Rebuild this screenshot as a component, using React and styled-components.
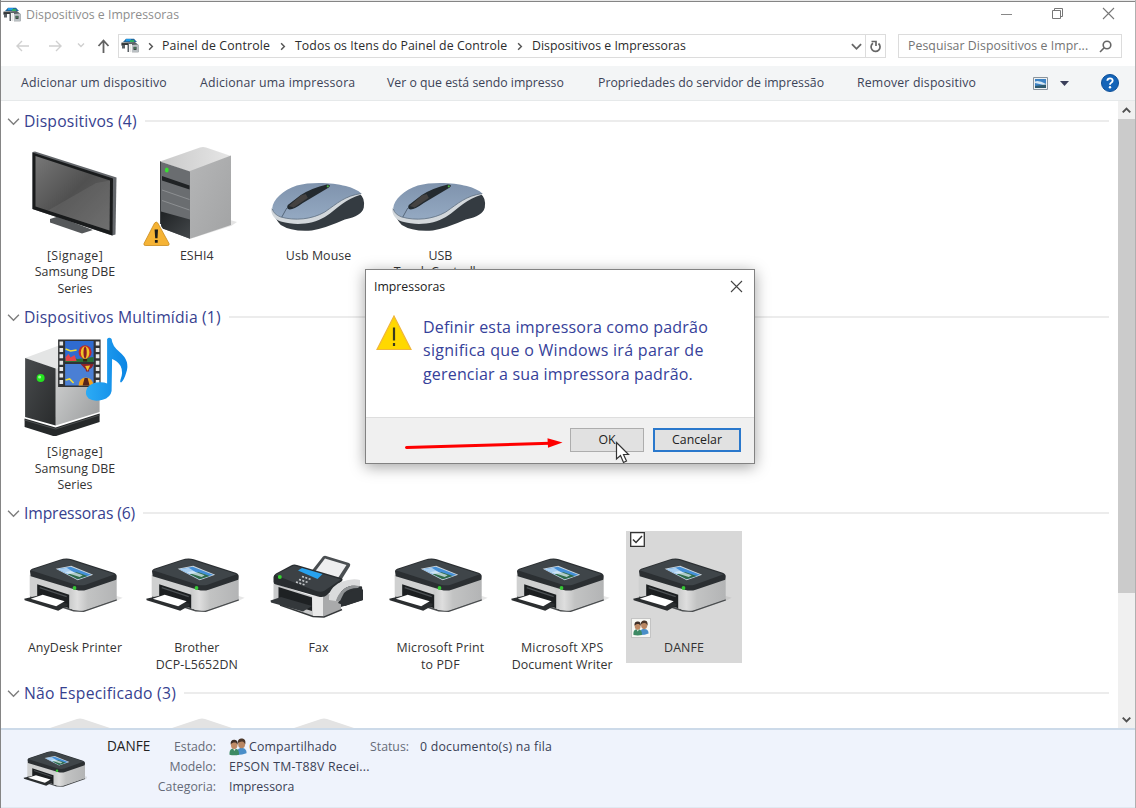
import React from "react";
import styled, { createGlobalStyle, css } from "styled-components";

const GlobalStyle = createGlobalStyle`
  *, *::before, *::after { box-sizing: border-box; }
  html, body { margin: 0; padding: 0; background: #fff; }
  body { overflow: hidden; }
  svg { display: block; flex: none; }
`;

const ui = css`
  font-family: "Open Sans", "Noto Sans", sans-serif;
  font-size: 12.3px;
  line-height: 16px;
  white-space: nowrap;
`;

const Window = styled.main`
  ${ui}
  position: relative;
  display: flex;
  flex-direction: column;
  width: 1136px;
  height: 808px;
  overflow: hidden;
  color: #333;
  background: #fff;
  border-left: 1px solid #858585;
  border-right: 1px solid #b0b0b0;
`;

const TopEdge = styled.div`
  flex: none;
  height: 2px;
  background: #e8e8e8;
  border-bottom: 1px solid #858585;
`;

const TitleBar = styled.header`
  display: flex;
  align-items: center;
  flex: none;
  height: 27px;
  padding: 0 20px 2px 2px;
`;

const Title = styled.h1`
  flex: 1;
  margin: 0 0 0 5px;
  font-size: inherit;
  font-weight: 400;
  color: #8e8e8e;
`;

const WindowControls = styled.div`
  display: flex;
  gap: 38px;
  margin-top: -3px;
`;

const NavBar = styled.nav`
  display: flex;
  align-items: center;
  flex: none;
  height: 34px;
  padding: 0 13px 0 14px;
`;

const NavButtons = styled.div`
  display: flex;
  align-items: center;
  width: 103px;
`;

const AddressBox = styled.div`
  display: flex;
  align-items: center;
  width: 768px;
  height: 24px;
  padding-left: 2px;
  border: 1px solid #dcdcdc;
`;

const Crumb = styled.span`
  width: ${(p) => p.$w}px;
  color: #2c2c2c;
  letter-spacing: ${(p) => p.$track || 0}px;
`;

const CrumbArrow = styled.span`
  display: flex;
  justify-content: center;
  width: ${(p) => p.$w || 25}px;
`;

const AddressTail = styled.div`
  display: flex;
  align-items: center;
  margin-left: auto;
  height: 100%;
`;

const RefreshButton = styled.div`
  display: flex;
  align-items: center;
  justify-content: center;
  width: 20px;
  height: 100%;
  margin-left: 3px;
  border-left: 1px solid #dcdcdc;
`;

const SearchBox = styled.div`
  display: flex;
  align-items: center;
  justify-content: space-between;
  flex: 1;
  height: 24px;
  margin-left: 12px;
  padding: 0 9px;
  color: #747474;
  letter-spacing: 0.06px;
  border: 1px solid #dcdcdc;
`;

const CommandBar = styled.div`
  display: flex;
  align-items: center;
  flex: none;
  height: 38px;
  padding: 0 16px 0 20px;
  border-top: 3px solid #fff;
  background: #f3f5f6;
  border-bottom: 1px solid #e6e9ea;
`;

const Command = styled.span`
  width: ${(p) => p.$w}px;
  color: #3c4357;
  letter-spacing: ${(p) => p.$track || 0}px;
`;

const ViewTools = styled.div`
  display: flex;
  flex: 1;
  align-items: center;
  gap: 12px;
`;

const Body = styled.div`
  display: flex;
  flex: 1;
  min-height: 0;
`;

const Content = styled.section`
  flex: 1;
  min-width: 0;
  padding: 8px 9px 0 6px;
  overflow: hidden;
`;

const GroupHead = styled.div`
  display: flex;
  align-items: center;
  height: 24px;
  margin-bottom: 6px;
`;

const GroupTitle = styled.h2`
  margin: 0 0 0 4px;
  font-size: 15.7px;
  line-height: 22px;
  font-weight: 400;
  color: #36418f;
  letter-spacing: ${(p) => p.$track || 0}px;
`;

const Rule = styled.div`
  flex: 1;
  height: 2px;
  margin-left: 8px;
  background: #ececec;
`;

const Grid = styled.div`
  display: flex;
  align-items: flex-start;
  gap: 5.8px;
  padding-left: 10px;
  margin-bottom: 2px;
`;

const Tile = styled.div`
  position: relative;
  width: 116px;
  padding-bottom: 6px;
  text-align: center;
  background: ${(p) => (p.$selected ? "#d8d8d8" : "transparent")};
`;

const TileLabel = styled.div`
  color: #333;
  font-size: 12.4px;
  line-height: 16.4px;
  letter-spacing: ${(p) => p.$track ?? 0.08}px;
`;

const Check = styled.span`
  position: absolute;
  left: 4px;
  top: 1px;
`;

const SharedBadge = styled.span`
  position: absolute;
  left: 5px;
  top: 87px;
  width: 20px;
  height: 20px;
  padding: 1px;
  background: #f7f7f4;
  border: 1px solid #c4c4c4;
`;

const Scrollbar = styled.div`
  display: flex;
  flex-direction: column;
  width: 17px;
  background: #f0f0f0;
`;

const ScrollButton = styled.div`
  display: flex;
  align-items: center;
  justify-content: center;
  height: 18px;
  margin-top: ${(p) => (p.$end ? "auto" : 0)};
`;

const Thumb = styled.div`
  height: 474px;
  background: #cbcbcb;
`;

const Details = styled.footer`
  display: flex;
  flex: none;
  height: 80px;
  padding: 0 0 0 22px;
  background: #eff3fc;
  border-top: 2px solid #ccdae9;
  border-bottom: 1px solid #e0e9f2;
`;

const DetailsThumb = styled.div`
  width: 66px;
  padding: 20px 0 0;
  margin-left: -1px;
`;

const DetailsName = styled.div`
  width: 46px;
  margin: 8px 3px 0 19px;
  font-size: 13.6px;
  color: #222;
`;

const Fields = styled.dl`
  display: grid;
  grid-template-columns: ${(p) => p.$cols};
  grid-auto-rows: 20px;
  align-content: start;
  column-gap: ${(p) => p.$gap || 12}px;
  margin: 7px 0 0;
  line-height: 20px;
`;

const Term = styled.dt`
  text-align: right;
  color: #666b78;
`;

const Value = styled.dd`
  display: flex;
  align-items: center;
  gap: 2px;
  margin: 0;
  color: #3a3f55;
  letter-spacing: ${(p) => p.$track || 0}px;
`;

const Dialog = styled.div`
  position: absolute;
  left: 364px;
  top: 269px;
  display: flex;
  flex-direction: column;
  width: 390px;
  height: 195px;
  background: #fff;
  border: 1px solid #828282;
  box-shadow: 0 3px 14px rgba(0, 0, 0, 0.36);
`;

const DialogHead = styled.div`
  display: flex;
  align-items: center;
  justify-content: space-between;
  height: 32px;
  padding: 1px 11px 0 8px;
  color: #222;
`;

const DialogBody = styled.div`
  display: flex;
  flex: 1;
  padding: 13px 0 0 10px;
`;

const Message = styled.p`
  margin: 1px 0 0 11px;
  font-size: 16px;
  line-height: 23.3px;
  color: #36419a;
`;

const MessageLine = styled.span`
  display: block;
  letter-spacing: ${(p) => p.$track || 0}px;
`;

const DialogFoot = styled.div`
  display: flex;
  justify-content: flex-end;
  gap: 9px;
  height: 46px;
  padding: 10px 13px 0 0;
  background: #f0f0f0;
  border-top: 1px solid #dedede;
`;

const Button = styled.button`
  ${ui}
  width: ${(p) => p.$w}px;
  height: 24px;
  padding: 0;
  color: #222;
  background: #e1e1e1;
  border: ${(p) => (p.$focus ? "2px solid #2a78cc" : "1px solid #adadad")};
`;

const Overlay = styled.div`
  position: absolute;
  left: ${(p) => p.$x}px;
  top: ${(p) => p.$y}px;
`;

const Chevron = ({ dir = "down", size = 12, color = "#777", w = 1.4 }) => {
  const d = { down: "M1 3.5 6 8.5 11 3.5", up: "M1 8.5 6 3.5 11 8.5", right: "M4.5 2.5 8 6 4.5 9.500" }[dir];
  return (
    <svg width={size} height={size} viewBox="0 0 12 12" fill="none" stroke={color} strokeWidth={w}>
      <path d={d} />
    </svg>
  );
};

const CloseIcon = ({ size = 13, color = "#777" }) => (
  <svg width={size} height={size} viewBox="0 0 13 13" stroke={color} strokeWidth="1.1">
    <path d="M1 1 12 12M12 1 1 12" />
  </svg>
);

const DevicesIcon = ({ w = 18 }) => (
  <svg width={w} height={w * 0.84} viewBox="0 0 18 15">
    <path d="M2 4 5 .8h8L16 4z" fill="#25699a" />
    <path d="M5 1h5v2H5z" fill="#1e9be8" />
    <path d="M9 2h4v2H9z" fill="#2faf63" />
    <path d="M.5 4.500 14 4l3.500 3v7.300H11V6H8v8H6.500V7H4v3.500H1V8H.5z" fill="#5b6166" />
    <path d="M.5 6H7" stroke="#222" strokeWidth="1.200" />
    <path d="M8.500 6h2v8h-2z" fill="#e6e6e6" />
    <path d="M11 7 17.300 6.500v7.500H11z" fill="#b9bfc2" />
    <path d="M12.500 8.800h3v3h-3z" fill="#2b2f31" />
    <circle cx="14" cy="10" r=".8" fill="#69c28a" />
  </svg>
);

const People = ({ size = 18 }) => (
  <svg width={size} height={size} viewBox="0 0 18 18">
    <path d="M8 17c-.5-5 1-7 4.500-7s5.200 2 5 5.200q-4 1.700-9.500 1.800z" fill="#4a8ec8" />
    <ellipse cx="12.600" cy="5.700" rx="3.500" ry="4.600" fill="#b98662" />
    <path d="M9 5C8.500 1.500 11 .4 13.200.6c3 .3 3.700 3 3 6-.7-2-1.500-2.700-3-3.100Q11 3.300 9 5z" fill="#4b3629" />
    <path d="M.5 16.800C.2 12.300 1.700 10.500 5.200 10.500s5 2 4.800 6.300q-4.700 1-9.500 0z" fill="#3d8a64" />
    <path d="M4 10.500 5.300 13l1.700-2.500z" fill="#e6ede9" />
    <ellipse cx="5.200" cy="6.700" rx="3.300" ry="4.200" fill="#bf8b66" />
    <path d="M1.700 6.500C1.200 3 3 1.500 5.500 1.700c2.600.1 3.700 2 3 5C7.700 5 7 4.500 5.500 4.500S2.800 5 1.700 6.500z" fill="#3d2d25" />
  </svg>
);

const Frame = ({ x, y, w = 116, h = 109, width = w, height = h, children }) => (
  <svg width={width} height={height} viewBox={`${x} ${y} ${w} ${h}`}>
    {children}
  </svg>
);

const Monitor = () => (
  <Frame x={17} y={139}>
    <defs>
      <linearGradient id="scr" x1="0" y1="0" x2="1" y2="1">
        <stop offset="0" stopColor="#777" />
        <stop offset=".5" stopColor="#505050" />
        <stop offset="1" stopColor="#686868" />
      </linearGradient>
    </defs>
    <path d="M50 219 58 216.500 93 230 82 233.500 50 222.500z" fill="#55585a" />
    <path d="M32.500 152 35 151.500 116.500 177.500 115.500 234.500 112 235.500 32.500 209z" fill="#63666a" />
    <path d="M32.500 152.500 113 178.500 112.500 235.500 32.500 209z" fill="#191b1c" />
    <path d="M35.500 156 110 180.500 109.500 230.500 35.500 206.500z" fill="url(#scr)" />
    <path d="M110 180.500 109.500 230.500 48 210.500 96 183z" fill="#8a8a8a" opacity=".22" />
  </Frame>
);

const Tower = () => (
  <Frame x={139} y={139}>
    <defs>
      <linearGradient id="twtop" x1="0" y1="0" x2="1" y2="0">
        <stop offset="0" stopColor="#c9c9c9" />
        <stop offset="1" stopColor="#e6e6e6" />
      </linearGradient>
      <linearGradient id="twside" x1="0" y1="0" x2="1" y2="1">
        <stop offset="0" stopColor="#b5b6b7" />
        <stop offset="1" stopColor="#a2a3a4" />
      </linearGradient>
      <linearGradient id="twbot" x1="0" y1="0" x2="1" y2="1">
        <stop offset="0" stopColor="#1f2224" />
        <stop offset="1" stopColor="#44484b" />
      </linearGradient>
    </defs>
    <path d="M190 239 231 226 237 222 230 220z" fill="#e4e4e4" />
    <path d="M160 161.500 200 147.500Q203 146.700 206 147.500L231 156 190 172z" fill="url(#twtop)" />
    <path d="M190 171 231 155.500V225L190 238.800z" fill="url(#twside)" />
    <path d="M160 161.500 190 171.500V238.800L164 229Q161 227.500 161 224z" fill="#6a6d70" />
    <path d="M162 176 189.500 185.500V189.500L162 180.500z" fill="#202325" />
    <path d="M162 190 189.500 199.500M162 200.500 189.500 210" stroke="#95989b" strokeWidth=".8" />
    <path d="M161 211.500 190 219.500V238.800L164 229Q161 227.500 161 224z" fill="url(#twbot)" />
    <path d="M160.500 161.500V224" stroke="#3b3e41" />
    <ellipse cx="166.800" cy="170" rx="1.900" ry="2.600" fill="#38e032" />
    <path d="M154.500 223.200Q156.200 220.800 157.900 223.200L169 243.500Q169.600 245.500 167.800 245.500H145.200Q143.400 245.500 144 243.500z" fill="#f5b335" stroke="#c98a1c" strokeWidth=".8" />
    <path d="M154.600 229.500H158L157.500 238.200H155.200zM154.900 240H157.700V242.800H154.900z" fill="#1c1c1c" />
  </Frame>
);

const Mouse = () => (
  <Frame x={261.2} y={139}>
    <defs>
      <linearGradient id="mtop" x1="0" y1="0" x2="0" y2="1">
        <stop offset="0" stopColor="#7f93ad" />
        <stop offset="1" stopColor="#94a9c2" />
      </linearGradient>
    </defs>
    <path d="M272 209Q275 219 281 225 292 232 312 230.500 326 228 345 219.500 362 216 364 207.500 365.500 198 360 194L342 189z" fill="#343b41" />
    <path d="M271.500 208C271 214 274 219 281 221.500 297 226 313 224 325 217 339 208 345 199 361.500 194.500L356 191z" fill="#d3d8dc" />
    <path d="M272.500 208C273 200 283 190 297 185.500 311 181.500 333 182.500 346 186Q357 189 361.500 193.500C345 196 338 203 325 212 312 219.500 295 221 281 217Q273 213.500 272.500 208z" fill="url(#mtop)" />
    <path d="M272.500 209Q274 214.500 281 217C295 221 312 219.500 325 212 338 203 345 196 361.500 193.500" fill="none" stroke="#5f7082" strokeWidth=".8" />
    <path d="M288 205Q286 209 290 209.500 294 209.500 303 203L329 187.500Q332 184.500 327 184.500 312 188 301 195z" fill="#232a2f" />
    <path d="M289 206 301 195.500 306 194 308 198 294 207.500z" fill="#444241" />
    <path d="M287 208 282 217" stroke="#56677a" />
    <circle cx="328" cy="186.300" r="1.100" fill="#49b843" />
  </Frame>
);

const MediaTower = () => (
  <Frame x={17.4} y={335}>
    <defs>
      <linearGradient id="mdside" x1="0" y1="0" x2="1" y2="1">
        <stop offset="0" stopColor="#d8d9d9" />
        <stop offset="1" stopColor="#999b9c" />
      </linearGradient>
      <linearGradient id="mdfront" x1="0" y1="0" x2="1" y2="1">
        <stop offset="0" stopColor="#484b4d" />
        <stop offset="1" stopColor="#292b2c" />
      </linearGradient>
      <linearGradient id="note" x1="0" y1="0" x2="1" y2="0">
        <stop offset="0" stopColor="#2cabf5" />
        <stop offset="1" stopColor="#0b85e4" />
      </linearGradient>
    </defs>
    <path d="M25 418.500 56 427.500 100 413.500V422L58 435.500Q55 436.500 52 435.500L25 427z" fill="#26292a" />
    <path d="M25 420 56 429 100 415" fill="none" stroke="#4c4f50" />
    <path d="M25.500 358 62 344.500 100 349 56 369z" fill="#e4e5e5" />
    <path d="M56 369 100 348V412L56 425.500z" fill="url(#mdside)" />
    <path d="M25.500 358 56 368.500V425.500L25.500 417z" fill="url(#mdfront)" />
    <circle cx="41" cy="378" r="4" fill="#24e51f" />
    <circle cx="40" cy="377" r="1.500" fill="#9dfb95" />
    <path d="M58.500 339.500H101V387H58.500z" fill="#303234" />
    <path d="M65.500 341H94V362H65.500z" fill="#2f6bd0" />
    <path d="M65.500 364H94V385.500H65.500z" fill="#4a7fd4" />
    <path d="M61.700 341.500V386M98 341.500V386" stroke="#e5e7e8" strokeWidth="3.600" strokeDasharray="4 2.400" />
    <path d="M65.500 358.500 70 357 78 359 94 357V362H65.500z" fill="#2a7137" />
    <path d="M66 357 69 354 71 357.500 75 355 77 361H66z" fill="#e4444b" />
    <path d="M66 349 71 351 77 350M66 380 70 379 74 383" stroke="#f2df37" strokeWidth="1.600" fill="none" />
    <ellipse cx="85.500" cy="352" rx="6.500" ry="6.700" fill="#c2272b" />
    <ellipse cx="85.500" cy="352.500" rx="4.300" ry="6.300" fill="#f0c32a" />
    <ellipse cx="85.500" cy="352.500" rx="1.600" ry="6" fill="#8a1d22" />
    <path d="M83.500 359H87.500V361.500H83.500z" fill="#352414" />
    <path d="M81 364H94Q93 368 89.500 369.500V371.500H86.500L86 369.500z" fill="#8f2229" />
    <path d="M85.500 366 90.500 365.500 88 371z" fill="#f0c32a" />
    <path d="M79 385.500Q79.500 377.500 86.500 377.500 93 378 94 385.500z" fill="#f0a021" />
    <path d="M83 385.500 85 378H88L90 385.500z" fill="#57251c" />
    <path d="M107.500 339Q109.500 336.500 112 339 112.500 346 120 352 131 361 126.500 373 124.500 380 121.500 382.500 120 382.500 120.800 380 124 372 121 366 118 361 112.500 359L112 391Q111 397.500 103 399.800 94 402 89 398.500 84.500 394 87.500 388 92 382 101 382.300 105 382.300 107.500 383.500z" fill="url(#note)" />
  </Frame>
);

const PrinterArt = () => (
  <>
    <defs>
      <linearGradient id="pside" x1="0" y1="0" x2="1" y2="0">
        <stop offset="0" stopColor="#c9caca" />
        <stop offset=".18" stopColor="#dedede" />
        <stop offset=".4" stopColor="#c2c3c3" />
        <stop offset="1" stopColor="#b3b4b5" />
      </linearGradient>
    </defs>
    <path d="M84 612 117 601 123 598 116 596z" fill="#9a9a9a" opacity=".25" />
    <path d="M30.500 597 74 611 84 611.500 117 600" fill="none" stroke="#4a4d4f" strokeWidth="1.800" />
    <path d="M30 575 75 589.500V610L30 596.500z" fill="#cfd0d0" />
    <path d="M69 588 84 590 117 577.500V599.500L85 610.500Q76 612.500 69 608z" fill="url(#pside)" />
    <path d="M30.300 571.500Q30.500 569.500 34 568.500L60 560Q66 558 72 559.500L114 573Q117.300 574.500 117 577L116.500 580 87 590Q82 591.800 76 590L31 576.500z" fill="#2b2f32" />
    <path d="M31 570.500 61 560.500Q66 559 71 560.500L115 574.500 86 585Q81 586.300 76 585z" fill="#3f4549" />
    <path d="M56 569 71.500 566 93.500 575 78 580.500z" fill="#cbd6de" />
    <path d="M58 569.500 71 567 91.500 575 78 579.500z" fill="#438ed6" />
    <path d="M58 569.500 67 568 78 575 76 578.500z" fill="#a9cff1" />
    <path d="M68 574.500 77 572.500 88 576.300 78 579.500z" fill="#306b48" />
    <path d="M65 572.500 71 571.300 83 575.500 80 577.300z" fill="#dcecf4" opacity=".75" />
    <circle cx="74.800" cy="588.300" r="1.900" fill="#35c634" />
    <path d="M37.500 584.500 69.500 595V608.500L37.500 598z" fill="#1c1f21" />
    <path d="M40 588 67 597" stroke="#4b5053" strokeWidth="1.400" />
    <path d="M24.500 599 37.500 596 68 604 67.500 606 58.500 611 25 600.500z" fill="#2b2e30" />
    <path d="M31 599 43 595 65 601.500 56.500 606.500z" fill="#fff" />
  </>
);

const Printer = () => (
  <Frame x={17.3} y={531.3}>
    <PrinterArt />
  </Frame>
);

const Fax = () => (
  <Frame x={261} y={531}>
    <path d="M310 573 323 556.500Q324.500 555.500 326 556L349 563Q351 564 350 566L340 582z" fill="#4a4e51" />
    <path d="M314 573 325 558.500 346.500 565 337 579.500z" fill="#eeeeef" />
    <path d="M344 584 362 586.500 363 600 341 607 330 599z" fill="#2c3033" />
    <path d="M273.500 583 312 596 323 597 341 602V609L323 616.500 313 616 280 605 273.500 600z" fill="#c8c9ca" />
    <path d="M312 595 323 597V616.500L313 616z" fill="#e9e9e9" />
    <path d="M323 596 341 590V609L323 616.500z" fill="#a9aaab" />
    <path d="M280 605 313 616.500 324 617 342 609.500" fill="none" stroke="#35383a" strokeWidth="1.500" />
    <path d="M273.500 577Q273.500 575 276 573.500L291 565.500Q294 564 297 565L341 578Q343.500 579 342 581L327 595Q324 598 318 596.500L276 584.500Q273.500 584 273.500 582z" fill="#282c2f" />
    <path d="M275 575 294 565.500 341 579.500 324 591Q321 592.500 316 591z" fill="#3c4145" />
    <path d="M298 570.500 302 568 322.500 574 317.500 579z" fill="#28a2ee" />
    <circle cx="279.800" cy="577" r="2" fill="#35d12f" />
    <path d="M302 576.500 311 579.500M299 579.500 308 582.500M296 582 305 585" stroke="#c7cacc" strokeWidth="1.600" strokeDasharray="2 1.500" />
    <path d="M278.500 587 312 597.500V611L278.500 601z" fill="#1e2123" />
    <path d="M270.500 600.500 281 597 312 606 303 611.500 271 602.500z" fill="#34383b" />
    <path d="M338 603Q344 591 361 588L363 590V600L345 606z" fill="#2c3033" />
    <path d="M329 600Q328 588 341 582 352 578 360 580L360 586Q350 584 344 589 338 594 336 601z" fill="#dadbdc" />
    <path d="M336 601Q338 594 344 589 350 584 360 586L358 588Q349 588 344 593L340 601z" fill="#909395" />
  </Frame>
);

const BoxTop = () => (
  <Frame x={0} y={0} h={60}>
    <path d="M30 18 60 8Q63 7 66 8L96 18V60H30z" fill="#e3e3e3" />
  </Frame>
);

const Item = ({ art, lines, selected, track = [] }) => (
  <Tile $selected={selected}>
    {art}
    {lines.map((t, i) => (
      <TileLabel key={t} $track={track[i]}>{t}</TileLabel>
    ))}
    {selected && (
      <>
        <Check>
          <svg width="15" height="15" viewBox="0 0 15 15">
            <path d="M.7.7H14.300V14.300H.7z" fill="#fff" stroke="#333" strokeWidth="1.300" />
            <path d="M3 7.500 6 10.500 12 4" fill="none" stroke="#333" strokeWidth="1.500" />
          </svg>
        </Check>
        <SharedBadge><People size={16} /></SharedBadge>
      </>
    )}
  </Tile>
);

const Group = ({ title, track, children }) => (
  <>
    <GroupHead>
      <Chevron size={13} color="#7d7d7d" w={1.3} />
      <GroupTitle $track={track}>{title}</GroupTitle>
      <Rule />
    </GroupHead>
    <Grid>{children}</Grid>
  </>
);

const signage = ["[Signage]", "Samsung DBE", "Series"];
const signageTrack = [0.35, 0.05, 0.02];

const commands = [
  { text: "Adicionar um dispositivo", w: 179, track: 0.21 },
  { text: "Adicionar uma impressora", w: 187, track: 0.17 },
  { text: "Ver o que está sendo impresso", w: 211, track: 0 },
  { text: "Propriedades do servidor de impressão", w: 259, track: 0 },
  { text: "Remover dispositivo", w: 176, track: 0.17 },
];

export default function App() {
  return (
    <>
      <GlobalStyle />
      <Window>
        <TopEdge />
        <TitleBar>
          <DevicesIcon />
          <Title>Dispositivos e Impressoras</Title>
          <WindowControls>
            <svg width="13" height="13" viewBox="0 0 13 13" stroke="#888"><path d="M1 7.500H12" /></svg>
            <svg width="13" height="13" viewBox="0 0 13 13" fill="none" stroke="#777">
              <path d="M1.500 3.500H9.500V11.500H1.500zM3.500 3.500V1.500H11.500V9.500H9.500" />
            </svg>
            <CloseIcon />
          </WindowControls>
        </TitleBar>
        <NavBar>
          <NavButtons>
            <svg width="103" height="20" viewBox="15 36 103 20" fill="none">
              <path d="M29 46H17M22 41 17 46 22 51" stroke="#d0d0d0" strokeWidth="1.400" />
              <path d="M49 46H61M56 41 61 46 56 51" stroke="#d0d0d0" strokeWidth="1.400" />
              <path d="M78 43.500 81 46.500 84 43.500" stroke="#cfcfcf" strokeWidth="1.400" />
              <path d="M103.500 53V41M98.500 46 103.500 40.500 108.500 46" stroke="#626262" strokeWidth="1.800" />
            </svg>
          </NavButtons>
          <AddressBox>
            <DevicesIcon />
            <CrumbArrow $w={23}><Chevron dir="right" size={11} color="#555" w={1.6} /></CrumbArrow>
            <Crumb $w={108} $track={0.16}>Painel de Controle</Crumb>
            <CrumbArrow><Chevron dir="right" size={11} color="#555" w={1.6} /></CrumbArrow>
            <Crumb $w={212} $track={0.08}>Todos os Itens do Painel de Controle</Crumb>
            <CrumbArrow><Chevron dir="right" size={11} color="#555" w={1.6} /></CrumbArrow>
            <Crumb $w={160} $track={0.03}>Dispositivos e Impressoras</Crumb>
            <AddressTail>
              <Chevron size={11} color="#666" w={2} />
              <RefreshButton>
                <svg width="13" height="13" viewBox="0 0 13 13" fill="none" stroke="#666" strokeWidth="1.700">
                  <path d="M9.500 3.500A4.500 4.500 0 1 1 4 3.200M2.500 1.500H7V6" />
                </svg>
              </RefreshButton>
            </AddressTail>
          </AddressBox>
          <SearchBox>
            Pesquisar Dispositivos e Impr...
            <svg width="13" height="13" viewBox="0 0 13 13" fill="none" stroke="#666" strokeWidth="1.600">
              <circle cx="8" cy="5" r="3.800" /><path d="M5.200 7.800 1 12" />
            </svg>
          </SearchBox>
        </NavBar>
        <CommandBar>
          {commands.map((c) => (
            <Command key={c.text} $w={c.w} $track={c.track}>{c.text}</Command>
          ))}
          <ViewTools>
            <svg width="15" height="13" viewBox="0 0 15 13">
              <path d="M.5.5H14.500V12.500H.5z" fill="#eef1f3" stroke="#8a949c" />
              <path d="M2 2H13V11H2z" fill="#3d83c4" />
              <path d="M2 4.500Q6 3 13 7V8.500L2 6z" fill="#d7e8f4" />
              <path d="M2 9 13 7.500V11H2z" fill="#2f5a6e" />
            </svg>
            <svg width="9" height="5" viewBox="0 0 9 5"><path d="M0 0H9L4.500 5z" fill="#3a3f5a" /></svg>
          </ViewTools>
          <svg width="18" height="18" viewBox="0 0 18 18">
            <circle cx="9" cy="9" r="8.500" fill="#1464b8" stroke="#0d4f98" />
            <path d="M6.300 6.800Q6.500 4.300 9 4.300T11.700 6.600Q11.700 8 10.200 8.800 9 9.500 9 10.800" fill="none" stroke="#fff" strokeWidth="1.800" />
            <circle cx="9" cy="13.300" r="1.200" fill="#fff" />
          </svg>
        </CommandBar>
        <Body>
          <Content>
            <Group title="Dispositivos (4)" track={0.18}>
              <Item art={<Monitor />} lines={signage} track={signageTrack} />
              <Item art={<Tower />} lines={["ESHI4"]} />
              <Item art={<Mouse />} lines={["Usb Mouse"]} />
              <Item art={<Mouse />} lines={["USB", "Touch Controller"]} track={[0, -0.2]} />
            </Group>
            <Group title="Dispositivos Multimídia (1)" track={0.18}>
              <Item art={<MediaTower />} lines={signage} track={signageTrack} />
            </Group>
            <Group title="Impressoras (6)" track={-0.13}>
              <Item art={<Printer />} lines={["AnyDesk Printer"]} />
              <Item art={<Printer />} lines={["Brother", "DCP-L5652DN"]} />
              <Item art={<Fax />} lines={["Fax"]} />
              <Item art={<Printer />} lines={["Microsoft Print", "to PDF"]} track={[0.15, 0.15]} />
              <Item art={<Printer />} lines={["Microsoft XPS", "Document Writer"]} track={[0.25, 0.08]} />
              <Item art={<Printer />} lines={["DANFE"]} selected />
            </Group>
            <Group title="Não Especificado (3)" track={0.26}>
              <Item art={<BoxTop />} lines={[]} />
              <Item art={<BoxTop />} lines={[]} />
              <Item art={<BoxTop />} lines={[]} />
            </Group>
          </Content>
          <Scrollbar>
            <ScrollButton><Chevron dir="up" size={9} color="#505050" w={2.6} /></ScrollButton>
            <Thumb />
            <ScrollButton $end><Chevron size={9} color="#505050" w={2.6} /></ScrollButton>
          </Scrollbar>
        </Body>
        <Details>
          <DetailsThumb>
            <Frame x={22} y={557} w={98} h={58} width={65} height={38.5}><PrinterArt /></Frame>
          </DetailsThumb>
          <DetailsName>DANFE</DetailsName>
          <Fields $cols="60px 141px" $gap={13}>
            <Term>Estado:</Term>
            <Value $track={0.16}><People size={18} /><span>Compartilhado</span></Value>
            <Term>Modelo:</Term>
            <Value $track={0.2}>EPSON TM-T88V Recei...</Value>
            <Term>Categoria:</Term>
            <Value>Impressora</Value>
          </Fields>
          <Fields $cols="38px auto">
            <Term>Status:</Term>
            <Value $track={0.22}>0 documento(s) na fila</Value>
          </Fields>
        </Details>
        <Dialog>
          <DialogHead>
            Impressoras
            <CloseIcon color="#444" />
          </DialogHead>
          <DialogBody>
            <svg width="36" height="36" viewBox="0 0 36 36">
              <path d="M18 1 35 34.500H1z" fill="#ffd800" stroke="#f0b63a" strokeWidth="1.200" />
              <path d="M18 12.500V25.500M18 28V31" stroke="#3a3a20" strokeWidth="2.200" />
            </svg>
            <Message>
              <MessageLine $track={0.2}>Definir esta impressora como padrão</MessageLine>
              <MessageLine $track={0.29}>significa que o Windows irá parar de</MessageLine>
              <MessageLine $track={0.17}>gerenciar a sua impressora padrão.</MessageLine>
            </Message>
          </DialogBody>
          <DialogFoot>
            <Button $w={74}>OK</Button>
            <Button $w={88} $focus>Cancelar</Button>
          </DialogFoot>
        </Dialog>
        <Overlay $x={403} $y={434}>
          <svg width="160" height="18" viewBox="404 434 160 18">
            <path d="M406.500 447.500 550 443.300" stroke="#fe0000" strokeWidth="3" strokeLinecap="round" />
            <path d="M547.500 438.200 562.500 442.600 548 447.800z" fill="#fe0000" />
          </svg>
        </Overlay>
        <Overlay $x={614} $y={441}>
          <svg width="16" height="24" viewBox="0 0 16 24">
            <path d="M1.500 1.500V18L5.500 14.500 8.500 21.500 11.500 20 8.500 13.500H13.500z" fill="#fff" stroke="#333" strokeWidth="1.200" />
          </svg>
        </Overlay>
      </Window>
    </>
  );
}
